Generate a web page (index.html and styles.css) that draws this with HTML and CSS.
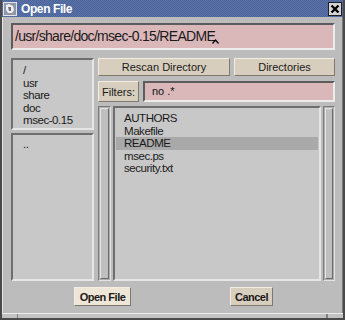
FILE: index.html
```html
<!DOCTYPE html>
<html lang="en">
<head>
    <meta charset="UTF-8">
    <title>Open File</title>
    <link rel="stylesheet" href="styles.css">
</head>
<body>
    <div class="window">
        <div class="titlebar">
            <span class="win-icon">
                <svg width="14" height="14" viewBox="0 0 14 14">
                    <rect x="0.5" y="0.5" width="13" height="13" fill="#8f96a8" stroke="#e4e4e4"/>
                    <path d="M3 3 L6 2 L10 4 L11 8 L9 11 L5 11 L3 8 Z" fill="#eeeeee"/>
                    <path d="M5 5 L8 5 L8 9 L6 9 Z" fill="#6c7284"/>
                </svg>
            </span>
            <span class="win-title">Open File</span>
            <span class="win-close">
                <svg width="10" height="10" viewBox="0 0 10 10">
                    <path d="M1.5 1.5 L8.5 8.5 M8.5 1.5 L1.5 8.5" stroke="#000" stroke-width="2.4"/>
                </svg>
            </span>
        </div>

        <div class="client">
            <div class="entry path">/usr/share/doc/msec-0.15/README<svg class="caret" width="7" height="5" viewBox="0 0 7 5"><path d="M0.5 4.5 L3.5 1 L6.5 4.5" fill="none" stroke="#000" stroke-width="1.2"/></svg></div>

            <div class="main">
                <div class="left-col">
                    <div class="list dirs">
                        <div>/</div>
                        <div>usr</div>
                        <div>share</div>
                        <div>doc</div>
                        <div>msec-0.15</div>
                    </div>
                    <div class="list subdirs">
                        <div>..</div>
                    </div>
                </div>

                <div class="right-col">
                    <div class="btn-row">
                        <div class="btn">Rescan Directory</div>
                        <div class="btn">Directories</div>
                    </div>
                    <div class="filter-row">
                        <div class="btn">Filters:</div>
                        <div class="entry filter">no .*</div>
                    </div>
                    <div class="files-area">
                        <div class="scrollbar"><div class="slider"></div></div>
                        <div class="list files">
                            <div>AUTHORS</div>
                            <div>Makefile</div>
                            <div class="selected">README</div>
                            <div>msec.ps</div>
                            <div>security.txt</div>
                        </div>
                        <div class="scrollbar"><div class="slider"></div></div>
                    </div>
                </div>
            </div>

            <div class="actions">
                <div class="btn bold default open">Open File</div>
                <div class="btn bold cancel">Cancel</div>
            </div>
        </div>

        <div class="frame-bottom">
            <span class="seg small"></span>
            <span class="seg wide"></span>
            <span class="seg"></span>
        </div>
    </div>
</body>
</html>
```

FILE: styles.css
```css
body {
    margin: 0;
    width: 345px;
    height: 320px;
    overflow: hidden;
    font-family: "Liberation Sans", Arial, sans-serif;
    color: #111;
}
.window {
    width: 345px;
    height: 320px;
    box-sizing: border-box;
    border-left: 2px solid #4a4a4a;
    border-right: 2px solid #4a4a4a;
    background: #bcbcbc;
    display: flex;
    flex-direction: column;
}
.titlebar {
    height: 17px;
    flex: none;
    display: flex;
    align-items: center;
    padding: 0 1px 0 1px;
    background: repeating-conic-gradient(#5b74aa 0 25%, #4a6299 0 50%) 0 0 / 2px 2px;
}
.win-icon {
    width: 14px;
    height: 14px;
    display: flex;
}
.win-title {
    margin-left: 4px;
    color: #fff;
    font-weight: bold;
    font-size: 12px;
    letter-spacing: -0.4px;
}
.win-close {
    margin-left: auto;
    width: 14px;
    height: 14px;
    box-sizing: border-box;
    border: 1px solid #202020;
    background: #d6d6d6;
    display: flex;
    align-items: center;
    justify-content: center;
}
.client {
    flex: 1;
    border-left: 1px solid #e4e4e4;
    border-right: 1px solid #7a7a7a;
    padding: 6px 7px 0 8px;
    display: flex;
    flex-direction: column;
}
.entry {
    box-sizing: border-box;
    background: #dab8ba;
    border: 2px solid;
    border-color: #5c5c5c #ececec #ececec #5c5c5c;
}
.path {
    height: 27px;
    line-height: 23px;
    padding-left: 2px;
    font-size: 14px;
    letter-spacing: -0.7px;
    color: #1a1a1a;
}
.caret {
    vertical-align: -3px;
    margin-left: -3px;
}
.main {
    margin-top: 8px;
    height: 223px;
    display: grid;
    grid-template-columns: 83px 1fr;
    column-gap: 4px;
}
.left-col {
    display: grid;
    grid-template-rows: 72px 1fr;
    row-gap: 3px;
}
.list {
    box-sizing: border-box;
    background: #c8c8c8;
    border: 2px solid;
    border-color: #6e6e6e #e6e6e6 #e6e6e6 #6e6e6e;
    font-size: 11.5px;
    letter-spacing: -0.45px;
    line-height: 12.5px;
    color: #1a1a1a;
}
.dirs {
    padding: 4px 0 0 10px;
}
.subdirs {
    padding: 3px 0 0 10px;
}
.right-col {
    display: flex;
    flex-direction: column;
}
.btn {
    box-sizing: border-box;
    background: #d8cebd;
    border: 1px solid;
    border-color: #f4eee2 #7f786c #7f786c #f4eee2;
    font-size: 11px;
    display: flex;
    align-items: center;
    justify-content: center;
    color: #1a1a1a;
}
.btn-row {
    height: 18px;
    display: grid;
    grid-template-columns: 132px 1fr;
    column-gap: 4px;
}
.filter-row {
    margin-top: 5px;
    height: 21px;
    display: grid;
    grid-template-columns: 41px 1fr;
    column-gap: 4px;
}
.filter {
    font-size: 11px;
    line-height: 17px;
    padding-left: 7px;
}
.files-area {
    margin-top: 4px;
    flex: 1;
    display: grid;
    grid-template-columns: 13px 1fr 12px;
    column-gap: 2px;
}
.files {
    padding: 4px 1px 0 1px;
}
.files div {
    padding-left: 8px;
}
.files .selected {
    background: #a9a9a9;
}
.scrollbar {
    box-sizing: border-box;
    background: #adadad;
    border: 1px solid;
    border-color: #7c7c7c #e2e2e2 #e2e2e2 #7c7c7c;
    padding: 1px;
    display: flex;
}
.slider {
    flex: 1;
    background: #bfbfbf;
    border: 1px solid;
    border-color: #e6e6e6 #6a6a6a #6a6a6a #e6e6e6;
}
.actions {
    margin-top: 6px;
    height: 19px;
    display: flex;
    justify-content: space-between;
    padding: 0 62px 0 63px;
}
.actions .open {
    width: 57px;
}
.actions .cancel {
    width: 43px;
}
.bold {
    font-weight: bold;
    letter-spacing: -0.5px;
}
.default {
    background: #eee7d8;
}
.frame-bottom {
    height: 7px;
    flex: none;
    display: flex;
    background: #c2c2c2;
    border-top: 1px solid #ececec;
    box-sizing: border-box;
    border-bottom: 2px solid #4a4a4a;
}
.seg {
    border-right: 1px solid #808080;
}
.seg.small {
    width: 15px;
}
.seg.wide {
    width: 308px;
}
```
